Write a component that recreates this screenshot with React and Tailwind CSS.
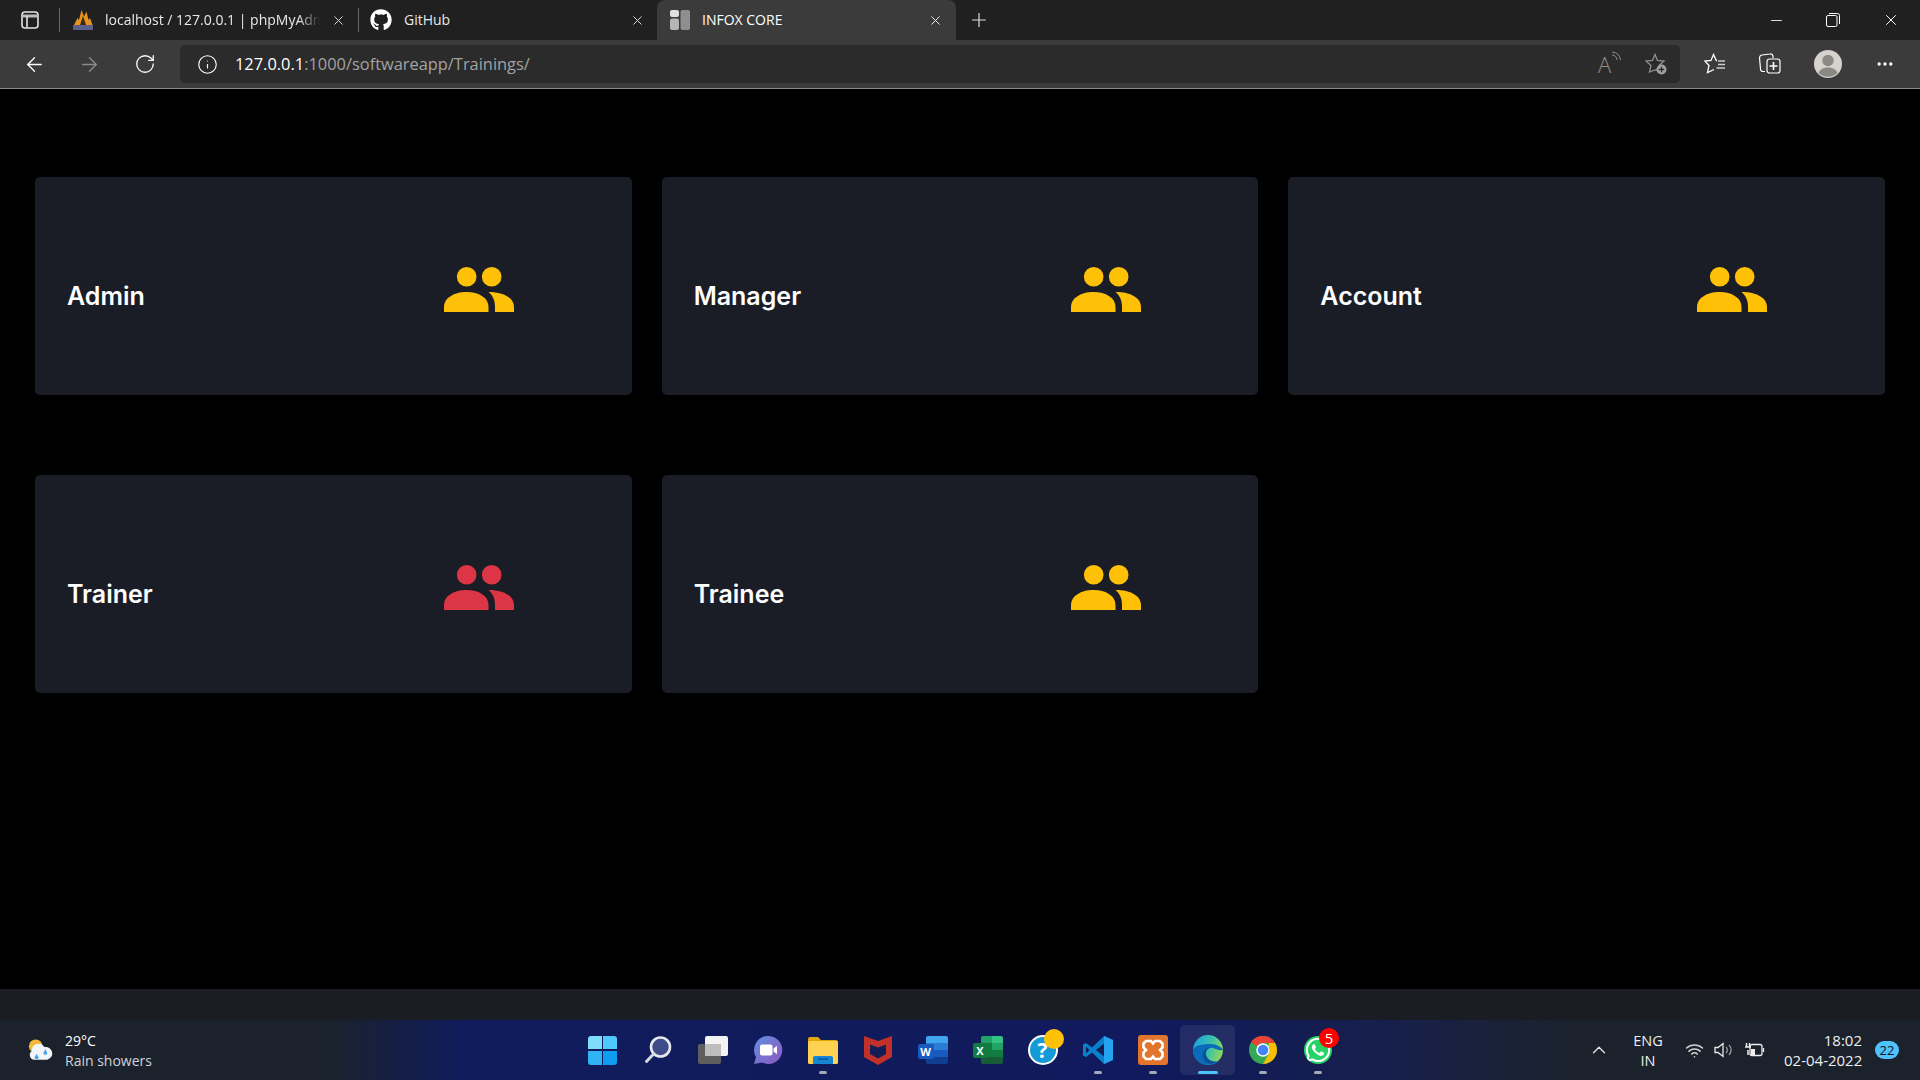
import React from "react";
import { ArrowLeft, ArrowRight, RotateCw, Info, Plus, X, Minus, ChevronUp, MoreHorizontal, Wifi } from "lucide-react";
import { FaGithub, FaWhatsapp } from "react-icons/fa";

const ui = { fontFamily: '"Open Sans","Noto Sans",sans-serif' };

function Users({ className }) {
  return (
    <svg viewBox="0 0 70 45" className={className} fill="currentColor">
      <circle cx="22.7" cy="9.8" r="9.8" />
      <circle cx="47.7" cy="9.8" r="9.8" />
      <path d="M0 45V40C0 31 10 25 22.5 25C35 25 44.5 31 44.5 40V45Z" />
      <path d="M44.5 25C60 25 70 31 70 40V45H51V40C51 33 49 29 44.5 25Z" />
    </svg>
  );
}

function Card({ title, red }) {
  return (
    <div className="h-[218px] rounded-[5px] bg-[#1a1d26] flex items-center">
      <div className="w-[409px] pl-8 pt-[20px] text-[25px] leading-none font-semibold text-white" style={{ fontFamily: 'Inter,"Noto Sans",sans-serif' }}>
        {title}
      </div>
      <Users className={`w-[70px] h-[45px] mt-[7px] ${red ? "text-[#dc3545]" : "text-[#ffc107]"}`} />
    </div>
  );
}

function Sep() {
  return <div className="w-px h-[24px] bg-[#6a6a6a] shrink-0" />;
}

function TabBar() {
  return (
    <div className="h-10 bg-[#202020] flex items-center text-white text-[14px] shrink-0" style={ui}>
      <div className="w-[59px] flex justify-center shrink-0">
        <svg viewBox="0 0 20 20" className="w-5 h-5" fill="none" stroke="#e4e4e4" strokeWidth="1.6">
          <rect x="2" y="2" width="16" height="16" rx="3" />
          <path d="M2.5 6H17.5" stroke="#bbb" strokeWidth="3" />
          <path d="M7 6V17.5" />
        </svg>
      </div>
      <Sep />
      <div className="w-[298px] flex items-center pl-3 shrink-0">
        <svg viewBox="0 0 22 22" className="w-[22px] h-[22px] shrink-0">
          <path d="M2 16L5.500 9L7 11L9.500 1L12 7.500L14.500 2.500L16.500 11L18 9L20.500 16Z" fill="#e8931b" />
          <path d="M8 16L11 7L14 16Z" fill="#3a2a12" />
          <rect x="1" y="16" width="20" height="5" fill="#5a5f8c" />
        </svg>
        <span className="ml-[11px] w-[215px] -mt-[2px] overflow-hidden whitespace-nowrap text-[#e8e8e8] [mask-image:linear-gradient(90deg,#000_90%,transparent)]">localhost / 127.0.0.1 | phpMyAdmin</span>
        <X className="w-[15px] h-[15px] ml-[11px] shrink-0 text-[#d8d8d8]" strokeWidth={1.6} />
      </div>
      <Sep />
      <div className="w-[298px] flex items-center pl-[11px] shrink-0">
        <FaGithub className="w-[22px] h-[22px] shrink-0 text-white" />
        <span className="ml-3 w-[225px] -mt-[2px] text-[#e8e8e8]">GitHub</span>
        <X className="w-[15px] h-[15px] ml-[1px] shrink-0 text-[#d8d8d8]" strokeWidth={1.6} />
      </div>
      <div className="w-[299px] h-10 flex items-center pl-[13px] bg-[#3b3b3b] rounded-t-lg shrink-0">
        <svg viewBox="0 0 20 20" className="w-5 h-5 shrink-0">
          <rect x="0" y="0" width="9" height="7" rx="2" fill="#e0e0e0" />
          <rect x="0" y="8.5" width="9" height="11.5" rx="2" fill="#b5b5b5" />
          <rect x="10.5" y="0" width="9.5" height="20" rx="2" fill="#8f8f8f" />
        </svg>
        <span className="ml-[12px] w-[226px] -mt-[2px] text-white">INFOX CORE</span>
        <X className="w-[15px] h-[15px] shrink-0 text-[#eee]" strokeWidth={1.6} />
      </div>
      <Plus className="w-[22px] h-[22px] ml-[12px] -mt-[1px] shrink-0 text-[#ddd]" strokeWidth={1.3} />
      <div className="flex-1" />
      <Minus className="w-[17px] h-[17px] shrink-0 text-white mr-[41px]" strokeWidth={1.2} />
      <svg viewBox="0 0 14 14" className="w-[14px] h-[14px] shrink-0 mr-[42px]" fill="none" stroke="#fff" strokeWidth="1">
        <rect x="0.5" y="2.5" width="10.5" height="11" rx="1.5" />
        <path d="M3 .5H11.5A2 2 0 0 1 13.5 2.5V11" />
      </svg>
      <X className="w-[18px] h-[18px] shrink-0 mr-5 text-white" strokeWidth={1.3} />
    </div>
  );
}

function Toolbar() {
  return (
    <div className="h-[49px] bg-[#3b3b3b] border-b border-[#8a8a8a] flex items-center shrink-0" style={ui}>
      <ArrowLeft className="w-[23px] h-[23px] ml-[23px] shrink-0 text-white" strokeWidth={1.4} />
      <ArrowRight className="w-[23px] h-[23px] ml-[32px] shrink-0 text-[#8c8c8c]" strokeWidth={1.4} />
      <RotateCw className="w-[22px] h-[22px] ml-[33px] shrink-0 text-white" strokeWidth={1.4} />
      <div className="w-[1500px] h-[38px] ml-[24px] bg-[#2b2b2b] rounded-[5px] flex items-center shrink-0">
        <Info className="w-[21px] h-[21px] ml-[17px] text-white shrink-0" strokeWidth={1.3} />
        <div className="ml-[17px] text-[16.4px] whitespace-nowrap text-[#a3a3a3]">
          <span className="text-white">127.0.0.1</span>:1000/softwareapp/Trainings/
        </div>
        <div className="flex-1" />
        <div className="relative w-[21px] h-[22px] mr-[26px] text-[#8f8f8f] text-[22px] leading-[22px]">
          <span className="font-light">A</span>
          <svg viewBox="0 0 10 10" className="absolute -right-[2px] -top-[2px] w-[10px] h-[10px]" fill="none" stroke="#8f8f8f">
            <path d="M1 4A5 5 0 0 1 6 9M1 1A8.5 8.5 0 0 1 9.500 9" />
          </svg>
        </div>
        <svg viewBox="0 0 22 22" className="w-[22px] h-[22px] mr-[13px] shrink-0">
          <path d="M10 1.5L12.5 7.5L19 8L14.5 12L15 17L10 17L4.5 19L6 12.5L1 8L7.5 7.5Z" fill="none" stroke="#8f8f8f" strokeWidth="1.3" />
          <circle cx="16.5" cy="16.5" r="5" fill="#a0a0a0" />
          <path d="M16.5 13.8V19.2M13.8 16.5H19.2" stroke="#2b2b2b" strokeWidth="1.3" />
        </svg>
      </div>
      <svg viewBox="0 0 22 22" className="w-[22px] h-[22px] ml-[24px] shrink-0" fill="none" stroke="#fff" strokeWidth="1.3">
        <path d="M13 7.500H12.300L9.500 1.500L7 7.500L0.800 8L5 12.500L3.500 19.500L10 16.500" />
        <path d="M14 8H21M14 11.500H21M12.500 15H21" stroke="#ccc" />
      </svg>
      <svg viewBox="0 0 22 22" className="w-[22px] h-[22px] ml-[33px] shrink-0" fill="none" stroke="#fff" strokeWidth="1.2">
        <path d="M6 18.5H3.5A2.5 2.5 0 0 1 1.5 15.5L0.5 5A3 3 0 0 1 3 2L11 1A2.5 2.5 0 0 1 14 3.5V5" />
        <rect x="8" y="6" width="13" height="14" rx="2.5" />
        <path d="M14.5 9V17M10.5 13H18.5" strokeWidth="1.6" />
      </svg>
      <svg viewBox="0 0 28 28" className="w-7 h-7 ml-[33px] shrink-0">
        <circle cx="14" cy="14" r="14" fill="#d6d3cd" />
        <circle cx="14" cy="10.5" r="5.7" fill="#8b8983" />
        <path d="M4.5 23C6 19 10 17.5 14 17.5S22 19 23.5 23A14 14 0 0 1 4.5 23Z" fill="#8b8983" />
      </svg>
      <MoreHorizontal className="w-5 h-5 ml-[33px] shrink-0 text-white" strokeWidth={2} />
    </div>
  );
}

function Cell({ children, dot, active, bar }) {
  return (
    <div className={`relative w-[55px] h-[50px] flex items-center justify-center rounded-[5px] shrink-0 ${active ? "bg-[#ffffff14]" : ""}`}>
      {children}
      {dot && <div className="absolute bottom-[1px] left-[24px] w-2 h-[3px] rounded-full bg-[#a5a8b5]" />}
      {bar && <div className="absolute bottom-[1px] left-[18px] w-[20px] h-[3px] rounded-full bg-[#4cc2ff]" />}
    </div>
  );
}

function Start() {
  return (
    <div className="grid grid-cols-2 gap-[1.5px] w-[29px] h-[29px]">
      <div className="rounded-tl-[3px] bg-[#7fdcfb]" />
      <div className="rounded-tr-[3px] bg-[#4fc8fb]" />
      <div className="rounded-bl-[3px] bg-[#2fb2f6]" />
      <div className="rounded-br-[3px] bg-[#0f9cf3]" />
    </div>
  );
}

function TaskIcons() {
  return (
    <div className="flex items-center" style={ui}>
      <Cell><Start /></Cell>
      <Cell>
        <svg viewBox="0 0 28 28" className="w-7 h-7" fill="none">
          <circle cx="16.5" cy="11" r="9.5" fill="#3f4a8a" stroke="#e6e8ee" strokeWidth="2.6" />
          <path d="M9.5 18L2.5 25.5" stroke="#d6d8de" strokeWidth="3" strokeLinecap="round" />
        </svg>
      </Cell>
      <Cell>
        <div className="relative w-[30px] h-[28px]">
          <div className="absolute left-0 bottom-0 w-[23px] h-[20px] rounded-[2px] bg-[#5e5e5e]" />
          <div className="absolute right-0 top-0 w-[23px] h-[20px] rounded-[2px] bg-[#f3f3f3]" />
          <div className="absolute left-[7px] top-[8px] w-[16px] h-[12px] bg-[#bdbdbd]" />
        </div>
      </Cell>
      <Cell>
        <svg viewBox="0 0 30 30" className="w-[30px] h-[30px]">
          <defs>
            <linearGradient id="tm" x1="0" y1="0" x2="1" y2="1">
              <stop offset="0" stopColor="#5f8fe0" />
              <stop offset="1" stopColor="#8e57c0" />
            </linearGradient>
          </defs>
          <path d="M15.5 1A14 14 0 1 1 9 27.500L1 29L3 22A14 14 0 0 1 15.500 1Z" fill="url(#tm)" />
          <rect x="7" y="9.500" width="12.500" height="11" rx="2" fill="#fff" />
          <path d="M20.500 13.500L24 10.800V19.200L20.500 16.500Z" fill="#fff" />
        </svg>
      </Cell>
      <Cell dot>
        <svg viewBox="0 0 30 28" className="w-[30px] h-[28px]">
          <path d="M0 3A2 2 0 0 1 2 1H10L13 4H28A2 2 0 0 1 30 6V10H0Z" fill="#e5a50a" />
          <rect x="0" y="5" width="30" height="23" rx="1.500" fill="#ffd251" />
          <path d="M5 28V22A2 2 0 0 1 7 20H23A2 2 0 0 1 25 22V28Z" fill="#1685d6" />
          <rect x="10" y="22.500" width="10" height="1.200" fill="#0b4f8e" />
        </svg>
      </Cell>
      <Cell>
        <svg viewBox="0 0 28 30" className="w-[28px] h-[30px]">
          <path d="M0 1L14 6L28 1V22L14 30L0 22Z" fill="#c1302b" />
          <path d="M6 9.500L14 12.500L22 9.500V19L14 23.500L6 19Z" fill="#141e55" />
        </svg>
      </Cell>
      <Cell>
        <div className="relative w-[30px] h-[28px]">
          <div className="absolute right-0 top-0 w-[22px] h-[28px] rounded-[2px] overflow-hidden flex flex-col">
            <div className="flex-1 bg-[#41a5ee]" />
            <div className="flex-1 bg-[#2b7cd3]" />
            <div className="flex-1 bg-[#185abd]" />
            <div className="flex-1 bg-[#103f91]" />
          </div>
          <div className="absolute left-0 top-[8px] w-[16px] h-[15px] rounded-[2px] bg-[#185abd] text-white text-[11px] font-bold leading-[15px] text-center">W</div>
        </div>
      </Cell>
      <Cell>
        <div className="relative w-[30px] h-[28px]">
          <div className="absolute right-0 top-0 w-[22px] h-[28px] rounded-[2px] overflow-hidden grid grid-cols-2 grid-rows-4">
            <div className="bg-[#21a366]" /><div className="bg-[#33c481]" />
            <div className="bg-[#107c41]" /><div className="bg-[#21a366]" />
            <div className="bg-[#107c41]" /><div className="bg-[#107c41]" />
            <div className="bg-[#185c37]" /><div className="bg-[#185c37]" />
          </div>
          <div className="absolute left-0 top-[7px] w-[15px] h-[15px] rounded-[2px] bg-[#107c41] text-white text-[11px] font-bold leading-[15px] text-center">X</div>
        </div>
      </Cell>
      <Cell>
        <div className="relative w-[30px] h-[30px] rounded-full bg-[#159ad8] border-2 border-white text-white text-[21px] font-bold leading-[26px] text-center">?</div>
        <div className="absolute left-[29px] top-[4px] w-5 h-5 rounded-full bg-[#ffc107]" />
      </Cell>
      <Cell dot>
        <svg viewBox="0 0 30 30" className="w-[30px] h-[30px]">
          <path d="M21 1L30 5V25L21 29L9 17.500L3 22L0 20.500V9.500L3 8L9 12.500Z" fill="#0a7fcb" />
          <path d="M21 1L30 5V25L21 29Z" fill="#24a4ee" />
          <path d="M21 8.500L13 15L21 21.500Z" fill="#141e55" />
          <path d="M3 11.500L6.500 15L3 18.500Z" fill="#141e55" />
        </svg>
      </Cell>
      <Cell dot>
        <svg viewBox="0 0 30 30" className="w-[30px] h-[30px]">
          <rect width="30" height="30" rx="3" fill="#e2742b" />
          <path d="M8 6H13L15 8.500L17 6H22L24.500 8.500V12.500L22 15L24.500 17.500V21.500L22 24H17L15 21.500L13 24H8L5.500 21.500V17.500L8 15L5.500 12.500V8.500Z" fill="none" stroke="#fff" strokeWidth="2.600" />
        </svg>
      </Cell>
      <Cell active bar>
        <svg viewBox="0 0 30 30" className="w-[30px] h-[30px]">
          <defs>
            <linearGradient id="eg" x1="0" y1="0" x2="1" y2="0.300">
              <stop offset="0" stopColor="#1b9de2" />
              <stop offset="0.600" stopColor="#35c1b0" />
              <stop offset="1" stopColor="#86d562" />
            </linearGradient>
          </defs>
          <circle cx="15" cy="15" r="15" fill="url(#eg)" />
          <path d="M0 15C0 24 7 30 15 30C19 30 23 28.500 26 26C21 27 14 26 13 20C12.500 15 16 12 20 13C24 14 26 16 30 15C30 14 26 9 17 9C8 9 1 11 0 15Z" fill="#0c6bb8" />
          <path d="M12 26C8 21 10 13 17 12.500C13 14 12 17.500 13 20C14 24 18 26.500 22 27.500C18 29.500 14 28.500 12 26Z" fill="#0b4f8e" />
        </svg>
      </Cell>
      <Cell dot>
        <svg viewBox="0 0 28 28" className="w-7 h-7">
          <circle cx="14" cy="14" r="14" fill="#34a853" />
          <path d="M14 0A14 14 0 0 1 26.100 7H14A7 7 0 0 0 7.900 10.500L2 6A14 14 0 0 1 14 0Z" fill="#ea4335" />
          <path d="M26.100 7A14 14 0 0 1 14 28L20 17.500A7 7 0 0 0 20 10.500L19.500 7Z" fill="#fbbc05" />
          <circle cx="14" cy="14" r="6.800" fill="#fff" />
          <circle cx="14" cy="14" r="5.300" fill="#4285f4" />
        </svg>
      </Cell>
      <Cell dot>
        <FaWhatsapp className="w-7 h-7 text-white bg-[#25d366] rounded-full" />
        <div className="absolute left-[29px] top-[3px] w-5 h-5 rounded-full bg-[#f00] text-white text-[15px] leading-5 text-center">5</div>
      </Cell>
    </div>
  );
}

function Taskbar() {
  return (
    <div className="h-[60px] shrink-0 flex items-center bg-[linear-gradient(90deg,#1b222c_0%,#1b222c_17%,#101c5c_24%,#101a5c_60%,#161f4c_72%,#1b222c_82%,#1b222c_100%)] text-white" style={ui}>
      <div className="w-[575px] flex items-center shrink-0">
        <svg viewBox="0 0 28 24" className="w-[27px] h-[24px] ml-[27px] shrink-0">
          <circle cx="9" cy="8" r="7" fill="#f5b93a" />
          <path d="M7 22A5 5 0 0 1 5 13A7 7 0 0 1 18 9A6.500 6.500 0 0 1 21 22Z" fill="#f2f5fa" />
          <path d="M10 16L12 19.500A2 2 0 0 1 8 19.500Z" fill="#49a4ea" />
          <path d="M19 11L21 15A2 2 0 0 1 17 15Z" fill="#49a4ea" />
        </svg>
        <div className="ml-[11px] mt-[1px] text-[14px] leading-[20px] whitespace-nowrap">
          <div>29°C</div>
          <div className="text-[#d0d2d6]">Rain showers</div>
        </div>
      </div>
      <TaskIcons />
      <div className="flex-1" />
      <ChevronUp className="w-[22px] h-[22px] shrink-0 text-[#e8e8e8]" strokeWidth={1.4} />
      <div className="w-[50px] ml-[13px] mt-[1px] text-center text-[14.500px] leading-[20px] text-[#eee] shrink-0">ENG<br />IN</div>
      <Wifi className="w-[19px] h-[19px] ml-[12px] shrink-0 text-[#cfcfcf]" strokeWidth={2} />
      <svg viewBox="0 0 20 18" className="w-5 h-[18px] ml-[10px] shrink-0" fill="none" stroke="#e8e8e8" strokeWidth="1.300">
        <path d="M1 6.500H4L9 2.500V15.500L4 11.500H1Z" />
        <path d="M12 6A4 4 0 0 1 12 12M15 4A7 7 0 0 1 15 14" stroke="#999" />
      </svg>
      <svg viewBox="0 0 21 16" className="w-[21px] h-4 ml-[10px] shrink-0" fill="none" stroke="#eee" strokeWidth="1.300">
        <rect x="6" y="2.500" width="12" height="11" rx="2" />
        <path d="M19.500 6V10" />
        <rect x="7" y="7" width="4" height="6" fill="#eee" stroke="none" />
        <path d="M1 5H7M2.500 1V5M5.500 1V5M4 8V13" strokeWidth="1.500" />
      </svg>
      <div className="w-[78px] ml-[19px] text-right text-[15px] leading-[20px] whitespace-nowrap text-[#eee] shrink-0">
        <div>18:02</div>
        <div>02-04-2022</div>
      </div>
      <div className="ml-[13px] mr-[21px] w-6 h-[18px] rounded-full bg-[#4cc2ff] text-[#111] text-[13px] leading-[18px] text-center shrink-0">22</div>
    </div>
  );
}

export default function App() {
  return (
    <div className="w-[1920px] h-[1080px] flex flex-col bg-black overflow-hidden">
      <TabBar />
      <Toolbar />
      <div className="flex-1 px-[35px] pt-[88px]">
        <div className="grid grid-cols-3 gap-x-[30px] gap-y-[80px]">
          <Card title="Admin" />
          <Card title="Manager" />
          <Card title="Account" />
          <Card title="Trainer" red />
          <Card title="Trainee" />
        </div>
      </div>
      <div className="h-[31px] bg-[#1a1d24] shrink-0" />
      <Taskbar />
    </div>
  );
}
